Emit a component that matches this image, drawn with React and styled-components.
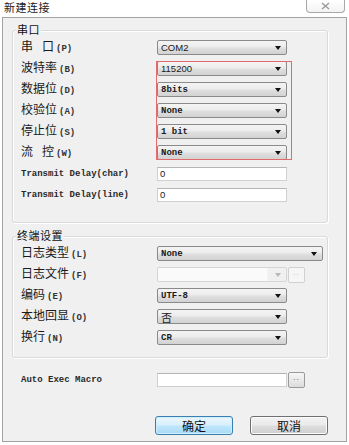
import React from 'react';
import styled, { createGlobalStyle } from 'styled-components';

const GlobalStyle = createGlobalStyle`
  html, body {
    margin: 0;
    padding: 0;
    background: #ffffff;
  }
  body {
    font-family: "Noto Sans CJK SC", "Liberation Sans", sans-serif;
    color: #000;
  }
`;

const Window = styled.div`
  width: 349px;
  height: 445px;
  background: #ffffff;
  display: flex;
  flex-direction: column;
  overflow: hidden;
`;

const TitleBar = styled.div`
  height: 17px;
  flex-shrink: 0;
  display: flex;
  justify-content: space-between;
  align-items: flex-start;
`;

const Title = styled.div`
  padding-left: 4px;
  font-size: 11px;
  line-height: 15px;
  letter-spacing: 0.5px;
  color: #1a1a1a;
`;

const CloseButton = styled.div`
  box-sizing: border-box;
  width: 39px;
  height: 13px;
  margin-right: 4px;
  border: 1px solid #a8a8a8;
  border-top: none;
  border-radius: 0 0 4px 4px;
  background: linear-gradient(#ffffff, #f3f3f3);
  display: flex;
  align-items: center;
  justify-content: center;
`;

const Panel = styled.div`
  flex: 1;
  margin: 0 2px 3px 2px;
  border: 1px solid #a3a3a3;
  background: #f0f0f0;
  padding: 0 18px 0 9px;
  display: flex;
  flex-direction: column;
`;

const Group = styled.div`
  position: relative;
  box-sizing: border-box;
  height: ${p => p.$h}px;
  margin-top: ${p => p.$top}px;
  border: 1px solid #d8dbdd;
  border-radius: 3px;
  box-shadow: inset 1px 1px 0 #ffffff, 1px 1px 0 #ffffff;
  padding: 6px 0 0 8px;
`;

const Legend = styled.span`
  position: absolute;
  top: -8px;
  left: 3px;
  padding: 0 1px;
  background: #f0f0f0;
  font-size: 11px;
  line-height: 13px;
  letter-spacing: 0.5px;
  color: #111;
`;

const Row = styled.div`
  display: grid;
  grid-template-columns: 136px auto;
  align-items: center;
  height: 21px;
`;

const Highlight = styled.div`
  position: relative;
  &::after {
    content: '';
    position: absolute;
    left: 135px;
    top: 3px;
    bottom: 3px;
    width: 136px;
    box-sizing: border-box;
    border: 1px solid #e36b6b;
    pointer-events: none;
  }
`;

const Label = styled.span`
  font-size: 12px;
  line-height: 14px;
  color: #1a1a1a;
  white-space: nowrap;
`;

const Gap = styled.span`
  display: inline-block;
  width: 9px;
`;

const Key = styled.span`
  margin-left: 2px;
  font-family: "Liberation Mono", monospace;
  font-size: 9px;
  font-weight: bold;
  color: #333;
`;

const MonoLabel = styled.span`
  font-family: "Liberation Mono", monospace;
  font-size: 9px;
  font-weight: bold;
  color: #2a2a2a;
  white-space: pre;
`;

const Field = styled.div`
  display: flex;
  align-items: center;
  gap: 1px;
`;

const fonts = {
  sans: '"Liberation Sans", sans-serif',
  mono: '"Liberation Mono", monospace',
  cjk: '"Noto Sans CJK SC", sans-serif',
};

const Combo = styled.div`
  box-sizing: border-box;
  width: ${p => p.$w || 130}px;
  height: 15px;
  border: 1px solid ${p => (p.$disabled ? '#d5d5d5' : '#8a8a8a')};
  border-radius: 2px;
  background: ${p => (p.$disabled
    ? 'linear-gradient(90deg, #fafafa 0%, #fafafa 85%, #f0f0f0 86%)'
    : 'linear-gradient(#f4f4f4 0%, #ececec 45%, #dfdfdf 55%, #d2d2d2 100%)')};
  display: flex;
  align-items: center;
  justify-content: space-between;
  padding: 0 5px 0 3px;
`;

const ComboText = styled.span`
  font-family: ${p => fonts[p.$font || 'mono']};
  font-size: ${p => (p.$font === 'cjk' ? '11px' : p.$font === 'sans' ? '9.5px' : '9px')};
  font-weight: ${p => (p.$font === 'mono' || !p.$font ? 'bold' : 'normal')};
  color: #1a1a1a;
  line-height: 12px;
`;

const Arrow = styled.span`
  width: 0;
  height: 0;
  border-left: 3.5px solid transparent;
  border-right: 3.5px solid transparent;
  border-top: 4px solid ${p => (p.$disabled ? '#b8b8b8' : '#111')};
`;

const TextBox = styled.div`
  box-sizing: border-box;
  width: 130px;
  height: 14px;
  border: 1px solid #d0d0d0;
  border-top-color: #b5b5b5;
  background: #ffffff;
  padding-left: 2px;
  font-family: "Liberation Sans", sans-serif;
  font-size: 9.5px;
  line-height: 12px;
  color: #222;
`;

const DotsButton = styled.div`
  box-sizing: border-box;
  width: 17px;
  height: 16px;
  border: 1px solid ${p => (p.$disabled ? '#d0d0d0' : '#9a9a9a')};
  border-radius: 2px;
  background: ${p => (p.$disabled ? '#f6f6f6' : 'linear-gradient(#f6f6f6, #dcdcdc)')};
  color: ${p => (p.$disabled ? '#b0b0b0' : '#444')};
  font-family: "Liberation Sans", sans-serif;
  font-size: 8px;
  line-height: 9px;
  text-align: center;
  letter-spacing: 1px;
`;

const MacroRow = styled(Row)`
  margin-top: 11px;
  padding-left: 9px;
`;

const ButtonBar = styled.div`
  margin-top: 26px;
  display: flex;
  justify-content: flex-end;
  gap: 17px;
`;

const Button = styled.div`
  box-sizing: border-box;
  width: 78px;
  height: 19px;
  border-radius: 3px;
  border: 1px solid ${p => (p.$primary ? '#3c7fb1' : '#707070')};
  background: ${p => (p.$primary
    ? 'linear-gradient(#eaf6fd 0%, #d9f0fc 45%, #bee6fd 55%, #a7d9f5 100%)'
    : 'linear-gradient(#f2f2f2 0%, #ebebeb 45%, #dddddd 55%, #cfcfcf 100%)')};
  box-shadow: inset 0 0 0 1px ${p => (p.$primary ? '#cdeeff' : '#fcfcfc')};
  display: flex;
  align-items: center;
  justify-content: center;
  font-size: 12px;
  color: #111;
`;

const Select = ({ value, font, w }) => (
  <Combo $w={w}>
    <ComboText $font={font}>{value}</ComboText>
    <Arrow />
  </Combo>
);

const Key1 = ({ k }) => <Key>({k})</Key>;

export default function App() {
  return (
    <Window>
      <GlobalStyle />
      <TitleBar>
        <Title>新建连接</Title>
        <CloseButton>
          <svg width="9" height="8" viewBox="0 0 9 8">
            <path d="M1 1 L8 7 M8 1 L1 7" stroke="#9a9a9a" strokeWidth="1.4" />
          </svg>
        </CloseButton>
      </TitleBar>
      <Panel>
        <Group $h={193} $top={12}>
          <Legend>串口</Legend>
          <Row>
            <Label>串<Gap />口<Key1 k="P" /></Label>
            <Select value="COM2" font="sans" />
          </Row>
          <Highlight>
            <Row>
              <Label>波特率<Key1 k="B" /></Label>
              <Select value="115200" font="sans" />
            </Row>
            <Row>
              <Label>数据位<Key1 k="D" /></Label>
              <Select value="8bits" />
            </Row>
            <Row>
              <Label>校验位<Key1 k="A" /></Label>
              <Select value="None" />
            </Row>
            <Row>
              <Label>停止位<Key1 k="S" /></Label>
              <Select value="1 bit" />
            </Row>
            <Row>
              <Label>流<Gap />控<Key1 k="W" /></Label>
              <Select value="None" />
            </Row>
          </Highlight>
          <Row>
            <MonoLabel>Transmit Delay(char)</MonoLabel>
            <TextBox>0</TextBox>
          </Row>
          <Row>
            <MonoLabel>Transmit Delay(line)</MonoLabel>
            <TextBox>0</TextBox>
          </Row>
        </Group>

        <Group $h={122} $top={13}>
          <Legend>终端设置</Legend>
          <Row>
            <Label>日志类型<Key1 k="L" /></Label>
            <Select value="None" w={166} />
          </Row>
          <Row>
            <Label>日志文件<Key1 k="F" /></Label>
            <Field>
              <Combo $disabled>
                <ComboText />
                <Arrow $disabled />
              </Combo>
              <DotsButton $disabled>..</DotsButton>
            </Field>
          </Row>
          <Row>
            <Label>编码<Key1 k="E" /></Label>
            <Select value="UTF-8" />
          </Row>
          <Row>
            <Label>本地回显<Key1 k="O" /></Label>
            <Select value="否" font="cjk" />
          </Row>
          <Row>
            <Label>换行<Key1 k="N" /></Label>
            <Select value="CR" />
          </Row>
        </Group>

        <MacroRow>
          <MonoLabel>Auto Exec Macro</MonoLabel>
          <Field>
            <TextBox />
            <DotsButton>..</DotsButton>
          </Field>
        </MacroRow>

        <ButtonBar>
          <Button $primary>确定</Button>
          <Button>取消</Button>
        </ButtonBar>
      </Panel>
    </Window>
  );
}
